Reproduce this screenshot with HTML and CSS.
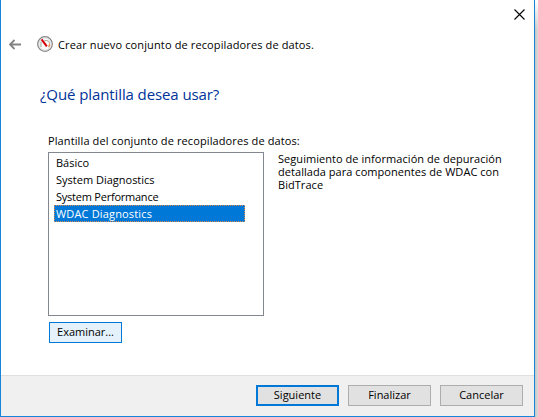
FILE: index.html
```html
<!DOCTYPE html>
<html lang="es">
<head>
<meta charset="utf-8">
<title>Crear nuevo conjunto de recopiladores de datos.</title>
<link rel="stylesheet" href="styles.css">
</head>
<body>
<main class="window">
  <div class="titlebar">
    <svg class="close" width="11" height="11" viewBox="0 0 11 11"><path d="M.5.5l10 10M10.500.5l-10 10"/></svg>
  </div>
  <header class="header">
    <svg class="back" width="12" height="11" viewBox="0 0 12 11"><path d="M12 5.500H1M5.500 1L1 5.500L5.500 10"/></svg>
    <svg class="gauge" width="16" height="16" viewBox="0 0 16 16">
      <circle cx="8" cy="8" r="7.300" fill="#fafafa" stroke="#858585" stroke-width="1.300"/>
      <circle cx="8" cy="8" r="6.200" fill="none" stroke="#cfcfcf" stroke-width=".8"/>
      <path d="M4 11V5.500" fill="none" stroke="#9aa89c"/>
      <path d="M7.500 4.500H9.500Q12 4.500 12.500 7" fill="none" stroke="#aaa694"/>
      <path d="M12.500 7.500Q12.800 9.500 11.500 11" fill="none" stroke="#ef8850" stroke-width="1.200"/>
      <path d="M4.600 3.300L9.800 10.300" fill="none" stroke="#d3000c" stroke-width="2"/>
    </svg>
    <span class="title">Crear nuevo conjunto de recopiladores de datos.</span>
  </header>
  <h1 class="question">¿Qué plantilla desea usar?</h1>
  <section class="content">
    <div class="left">
      <div class="label">Plantilla del conjunto de recopiladores de datos:</div>
      <ul class="list">
        <li>Básico</li>
        <li>System Diagnostics</li>
        <li class="condensed">System Performance</li>
        <li class="selected">WDAC Diagnostics</li>
      </ul>
      <button class="btn browse">Examinar...</button>
    </div>
    <p class="description">Seguimiento de información de depuración<br>detallada para componentes de WDAC con<br>BidTrace</p>
  </section>
  <footer class="footer">
    <button class="btn primary">Siguiente</button>
    <button class="btn">Finalizar</button>
    <button class="btn">Cancelar</button>
  </footer>
</main>
</body>
</html>
```
FILE: styles.css
```css
* { box-sizing: border-box; }
body {
  margin: 0;
  height: 417px;
  overflow: hidden;
  background:
    linear-gradient(to bottom, #fff, rgba(255, 255, 255, 0) 30px),
    linear-gradient(to right, #c4c4c4 535px, #dadada 538px);
  font: 11px/13px "Open Sans", "Noto Sans", sans-serif;
  color: #000;
}
.window {
  width: 535px;
  height: 417px;
  display: flex;
  flex-direction: column;
  background: #fff;
  border: 1px solid #1883d7;
  border-top: 0;
}
.titlebar {
  height: 34px;
  padding: 9px 9px 0 0;
  display: flex;
  justify-content: flex-end;
}
.close { fill: none; stroke: #000; stroke-width: 1.1; }
.header {
  height: 20px;
  padding-left: 8px;
  display: flex;
  align-items: center;
}
.back { fill: none; stroke: #838383; stroke-width: 1.8; }
.gauge { margin-left: 16px; }
.title { margin-left: 5px; padding-top: 1px; letter-spacing: .125px; }
.question {
  margin: 29px 0 0 39px;
  font-size: 15px;
  line-height: 22px;
  font-weight: 400;
  letter-spacing: -.1px;
  color: #003399;
}
.content {
  display: flex;
  margin: 29px 0 0 47px;
  flex: 1;
}
.left { width: 216px; }
.label { height: 18px; white-space: nowrap; letter-spacing: .11px; }
.list {
  margin: 0;
  padding: 1px 18px 0 5px;
  list-style: none;
  height: 164px;
  border: 1px solid #828790;
}
.list li { height: 17px; line-height: 17px; padding-left: 2px; }
.list .condensed { letter-spacing: -.23px; }
.list .selected {
  color: #fff;
  background: #0078d7;
  letter-spacing: .16px;
  outline: 1px dotted #d98a50;
  outline-offset: -1px;
}
.btn {
  width: 83px;
  height: 21px;
  padding: 0 0 2px;
  font: inherit;
  color: #000;
  background: #e1e1e1;
  border: 1px solid #adadad;
}
.browse {
  display: block;
  width: 73px;
  margin: 6px 0 0 1px;
  background: #e5f1fb;
  border-color: #0078d7;
}
.description { margin: 18px 0 0 14px; white-space: nowrap; letter-spacing: .05px; }
.footer {
  height: 41px;
  padding: 9px 11px 0 0;
  display: flex;
  justify-content: flex-end;
  gap: 9px;
  background: #f0f0f0;
  border-top: 1px solid #dfdfdf;
}
.primary { border: 2px solid #0078d7; }
```
